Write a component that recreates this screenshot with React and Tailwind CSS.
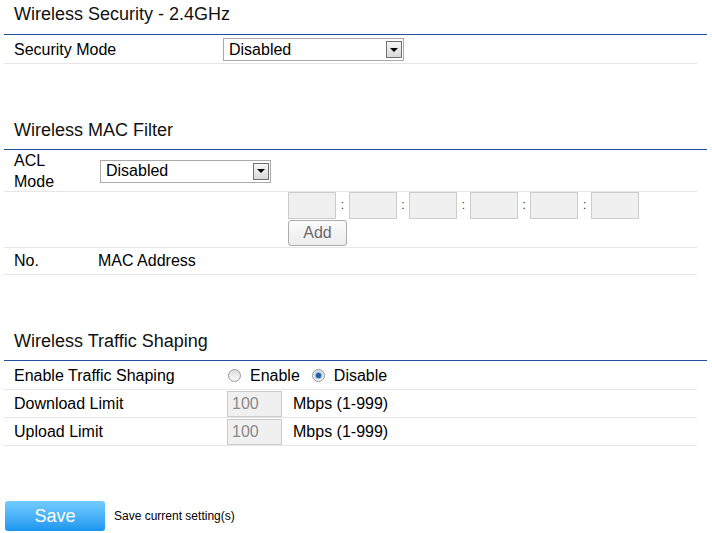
import { useState } from 'react';

const font = { fontFamily: '"Liberation Sans", Arial, sans-serif' };

const SectionTitle = ({ children, className = '' }) => (
  <div className={`h-[35px] border-b border-[#2150a0] pl-[10px] text-[18px] leading-[28px] text-[#111] ${className}`}>
    {children}
  </div>
);

// fake IE style dropdown
const FakeSelect = ({ value, width }) => (
  <div
    className={`flex h-[23px] items-center justify-between border border-[#a9a9a9] bg-white pl-[5px] pr-[1px] ${width}`}
  >
    <span className="text-[16px] leading-none text-black">{value}</span>
    <span className="flex h-[17px] w-[16px] items-center justify-center border border-[#707070] bg-gradient-to-b from-[#f6f6f6] to-[#d9d9d9]">
      <span className="h-0 w-0 border-x-[4px] border-t-[4px] border-x-transparent border-t-black" />
    </span>
  </div>
);

const Radio = ({ checked }) => (
  <span className="flex h-[13px] w-[13px] items-center justify-center rounded-full border border-[#9a9a9a] bg-gradient-to-b from-[#dedede] to-[#f8f8f8]">
    {checked && (
      <span className="h-[5px] w-[5px] rounded-full bg-[#1c5ea6] shadow-[0_0_1px_1px_#7aaee0]" />
    )}
  </span>
);

const MacBox = () => (
  <input
    disabled
    className="h-[27px] w-[48px] border border-[#cccccc] bg-[#f0f0f0]"
  />
);

const Colon = () => (
  <span className="w-[12.6px] text-center text-[12px] leading-[27px] text-[#333]">:</span>
);

export default function App() {
  const [shaping] = useState('disable');

  return (
    <div className="w-[712px] bg-white pl-[4px] text-[16px] text-black" style={font}>
      {/* ___________ Wireless Security ___________ */}
      <div className="w-[703px]">
        <SectionTitle>Wireless Security - 2.4GHz</SectionTitle>
      </div>
      <div className="flex h-[29px] w-[693px] items-center border-b border-[#e6e6e6] pt-[1px]">
        <div className="w-[219px] pl-[10px]">Security Mode</div>
        <FakeSelect value="Disabled" width="w-[181px]" />
      </div>

      {/* ___________ MAC Filter ___________ */}
      <div className="mt-[51px] w-[703px]">
        <SectionTitle className="pt-[1px]">Wireless MAC Filter</SectionTitle>
      </div>
      <div className="flex h-[42px] w-[693px] items-center border-b border-[#e6e6e6] pt-[1px]">
        <div className="w-[96px] pl-[10px] pr-[40px] leading-[21px]">ACL Mode</div>
        <FakeSelect value="Disabled" width="w-[171px]" />
      </div>
      <div className="flex h-[56px] w-[693px] flex-col border-b border-[#e6e6e6] pl-[284px]">
        <div className="flex">
          <MacBox />
          <Colon />
          <MacBox />
          <Colon />
          <MacBox />
          <Colon />
          <MacBox />
          <Colon />
          <MacBox />
          <Colon />
          <MacBox />
        </div>
        <button className="mt-[1px] h-[26px] w-[59px] rounded-[3px] border border-[#adadad] bg-gradient-to-b from-[#fbfbfb] to-[#ececec] text-[16px] text-[#6a6a6a]">
          Add
        </button>
      </div>
      <div className="flex h-[27px] w-[693px] items-center border-b border-[#e6e6e6]">
        <div className="w-[94px] pl-[10px]">No.</div>
        <div>MAC Address</div>
      </div>

      {/* ___________ Traffic Shaping ___________ */}
      <div className="mt-[51px] w-[703px]">
        <SectionTitle className="pt-[1px]">Wireless Traffic Shaping</SectionTitle>
      </div>
      <div className="flex h-[29px] w-[693px] items-center border-b border-[#e6e6e6] pt-[1px]">
        <div className="w-[224px] pl-[10px]">Enable Traffic Shaping</div>
        <Radio checked={shaping === 'enable'} />
        <span className="ml-[9px]">Enable</span>
        <span className="ml-[12px]">
          <Radio checked={shaping === 'disable'} />
        </span>
        <span className="ml-[9px]">Disable</span>
      </div>
      <div className="flex h-[28px] w-[693px] items-center border-b border-[#e6e6e6]">
        <div className="w-[223px] pl-[10px]">Download Limit</div>
        <input
          disabled
          value="100"
          className="h-[26px] w-[55px] border border-[#cccccc] bg-[#f0f0f0] pl-[4px] text-[16px] text-[#8a8a8a]"
        />
        <span className="ml-[11px]">Mbps (1-999)</span>
      </div>
      <div className="flex h-[28px] w-[693px] items-center border-b border-[#e6e6e6]">
        <div className="w-[223px] pl-[10px]">Upload Limit</div>
        <input
          disabled
          value="100"
          className="h-[26px] w-[55px] border border-[#cccccc] bg-[#f0f0f0] pl-[4px] text-[16px] text-[#8a8a8a]"
        />
        <span className="ml-[11px]">Mbps (1-999)</span>
      </div>

      <div className="mt-[55px] flex items-center pl-[1px]">
        <button className="h-[30px] w-[100px] rounded-[3px] bg-gradient-to-b from-[#72ccff] to-[#1597ef] text-[18px] text-white">
          Save
        </button>
        <span className="ml-[9px] text-[12px] text-black">Save current setting(s)</span>
      </div>
    </div>
  );
}
